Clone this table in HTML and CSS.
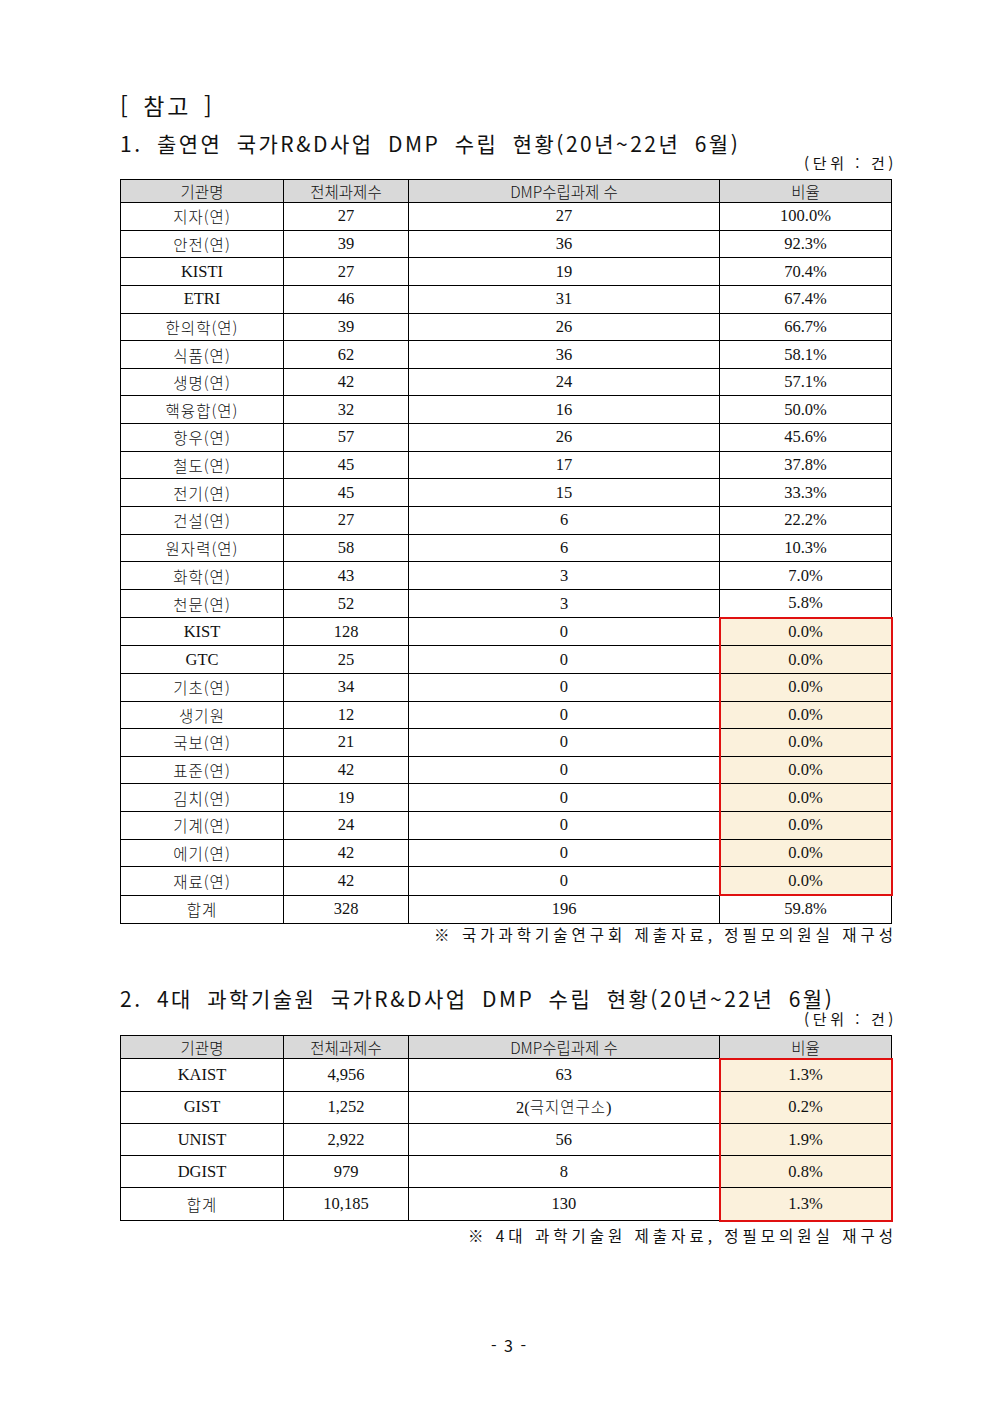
FILE: index.html
```html
<!DOCTYPE html>
<html lang="ko">
<head>
<meta charset="utf-8">
<title>참고</title>
<link rel="stylesheet" href="styles.css">
</head>
<body>
<div class="page">
  <div class="ref-title">[ 참고 ]</div>

  <div class="sec-title">1. 출연연 국가R&amp;D사업 DMP 수립 현황(20년~22년 6월)</div>
  <div class="unit">(단위 : 건)</div>
  <table class="tbl tbl1">
    <colgroup><col class="c1"><col class="c2"><col class="c3"><col class="c4"></colgroup>
    <thead>
      <tr><th>기관명</th><th>전체과제수</th><th>DMP수립과제 수</th><th>비율</th></tr>
    </thead>
    <tbody>
      <tr><td class="ko">지자(연)</td><td>27</td><td>27</td><td>100.0%</td></tr>
      <tr><td class="ko">안전(연)</td><td>39</td><td>36</td><td>92.3%</td></tr>
      <tr><td>KISTI</td><td>27</td><td>19</td><td>70.4%</td></tr>
      <tr><td>ETRI</td><td>46</td><td>31</td><td>67.4%</td></tr>
      <tr><td class="ko">한의학(연)</td><td>39</td><td>26</td><td>66.7%</td></tr>
      <tr><td class="ko">식품(연)</td><td>62</td><td>36</td><td>58.1%</td></tr>
      <tr><td class="ko">생명(연)</td><td>42</td><td>24</td><td>57.1%</td></tr>
      <tr><td class="ko">핵융합(연)</td><td>32</td><td>16</td><td>50.0%</td></tr>
      <tr><td class="ko">항우(연)</td><td>57</td><td>26</td><td>45.6%</td></tr>
      <tr><td class="ko">철도(연)</td><td>45</td><td>17</td><td>37.8%</td></tr>
      <tr><td class="ko">전기(연)</td><td>45</td><td>15</td><td>33.3%</td></tr>
      <tr><td class="ko">건설(연)</td><td>27</td><td>6</td><td>22.2%</td></tr>
      <tr><td class="ko">원자력(연)</td><td>58</td><td>6</td><td>10.3%</td></tr>
      <tr><td class="ko">화학(연)</td><td>43</td><td>3</td><td>7.0%</td></tr>
      <tr><td class="ko">천문(연)</td><td>52</td><td>3</td><td>5.8%</td></tr>
      <tr><td>KIST</td><td>128</td><td>0</td><td class="hl hl-first">0.0%</td></tr>
      <tr><td>GTC</td><td>25</td><td>0</td><td class="hl">0.0%</td></tr>
      <tr><td class="ko">기초(연)</td><td>34</td><td>0</td><td class="hl">0.0%</td></tr>
      <tr><td class="ko">생기원</td><td>12</td><td>0</td><td class="hl">0.0%</td></tr>
      <tr><td class="ko">국보(연)</td><td>21</td><td>0</td><td class="hl">0.0%</td></tr>
      <tr><td class="ko">표준(연)</td><td>42</td><td>0</td><td class="hl">0.0%</td></tr>
      <tr><td class="ko">김치(연)</td><td>19</td><td>0</td><td class="hl">0.0%</td></tr>
      <tr><td class="ko">기계(연)</td><td>24</td><td>0</td><td class="hl">0.0%</td></tr>
      <tr><td class="ko">에기(연)</td><td>42</td><td>0</td><td class="hl">0.0%</td></tr>
      <tr><td class="ko">재료(연)</td><td>42</td><td>0</td><td class="hl hl-last">0.0%</td></tr>
      <tr><td class="ko">합계</td><td>328</td><td>196</td><td>59.8%</td></tr>
    </tbody>
  </table>
  <div class="note note1">※ 국가과학기술연구회 제출자료, 정필모의원실 재구성</div>

  <div class="sec-title sec2">2. 4대 과학기술원 국가R&amp;D사업 DMP 수립 현황(20년~22년 6월)</div>
  <div class="unit">(단위 : 건)</div>
  <table class="tbl tbl2">
    <colgroup><col class="c1"><col class="c2"><col class="c3"><col class="c4"></colgroup>
    <thead>
      <tr><th>기관명</th><th>전체과제수</th><th>DMP수립과제 수</th><th>비율</th></tr>
    </thead>
    <tbody>
      <tr><td>KAIST</td><td>4,956</td><td>63</td><td class="hl hl-first">1.3%</td></tr>
      <tr><td>GIST</td><td>1,252</td><td>2(<span class="ko">극지연구소</span>)</td><td class="hl">0.2%</td></tr>
      <tr><td>UNIST</td><td>2,922</td><td>56</td><td class="hl">1.9%</td></tr>
      <tr><td>DGIST</td><td>979</td><td>8</td><td class="hl">0.8%</td></tr>
      <tr><td class="ko">합계</td><td>10,185</td><td>130</td><td class="hl hl-last">1.3%</td></tr>
    </tbody>
  </table>
  <div class="note note2">※ 4대 과학기술원 제출자료, 정필모의원실 재구성</div>

  <div class="page-no">- 3 -</div>
</div>
</body>
</html>
```
FILE: styles.css
```css
html, body {
  margin: 0;
  padding: 0;
  background: #ffffff;
}

body {
  color: #111111;
  font-family: "Noto Sans CJK KR", "Liberation Sans", sans-serif;
}

.page {
  width: 777px;
  padding: 90px 0 0 120px;
}

.ref-title {
  font-size: 23px;
  line-height: 30px;
  height: 30px;
  letter-spacing: 3px;
  word-spacing: 3px;
  margin-bottom: 11px;
}

.sec-title {
  font-size: 21px;
  line-height: 24px;
  height: 24px;
  letter-spacing: 2.5px;
  word-spacing: 6px;
  white-space: nowrap;
}

.sec2 {
  margin-top: 42px;
}

.unit {
  text-align: right;
  font-size: 15px;
  line-height: 16px;
  height: 16px;
  letter-spacing: 3.6px;
  margin-top: 0;
  margin-bottom: 8px;
}

.sec2 + .unit {
  margin-top: 1px;
  margin-bottom: 8px;
}

.tbl {
  width: 771px;
  border-collapse: collapse;
  table-layout: fixed;
  font-family: "Liberation Serif", "Noto Sans CJK KR", serif;
  font-size: 16.5px;
  color: #111111;
}

.tbl col.c1 { width: 163px; }
.tbl col.c2 { width: 125px; }
.tbl col.c3 { width: 311px; }
.tbl col.c4 { width: 172px; }

.tbl th,
.tbl td {
  border: 1px solid #000000;
  padding: 0;
  text-align: center;
  vertical-align: middle;
  font-weight: normal;
  white-space: nowrap;
}

.tbl th {
  background: #d9d9d9;
  height: 22px;
  font-family: "Noto Sans CJK KR", sans-serif;
  font-size: 15.5px;
  line-height: 20px;
  font-weight: 300;
}

.tbl1 td {
  height: 26.65px;
  line-height: 20px;
}

.tbl2 td {
  height: 31.2px;
  line-height: 20px;
}

.tbl .ko {
  font-family: "Noto Sans CJK KR", sans-serif;
  font-size: 15.5px;
  font-weight: 300;
  letter-spacing: 1px;
}

.tbl td.hl {
  background: #fbf1dc;
  border-left: 2px solid #e01010;
  border-right: 2px solid #e01010;
}

.tbl td.hl-first {
  border-top: 2px solid #e01010;
}

.tbl td.hl-last {
  border-bottom: 2px solid #e01010;
}

.note {
  text-align: right;
  font-size: 15.5px;
  line-height: 20px;
  height: 20px;
  letter-spacing: 4px;
  white-space: nowrap;
}

.note1 {
  margin-top: 0;
}

.note2 {
  margin-top: 3px;
}

.page-no {
  text-align: center;
  font-size: 16px;
  line-height: 20px;
  margin-top: 90px;
  word-spacing: 3px;
}
```
